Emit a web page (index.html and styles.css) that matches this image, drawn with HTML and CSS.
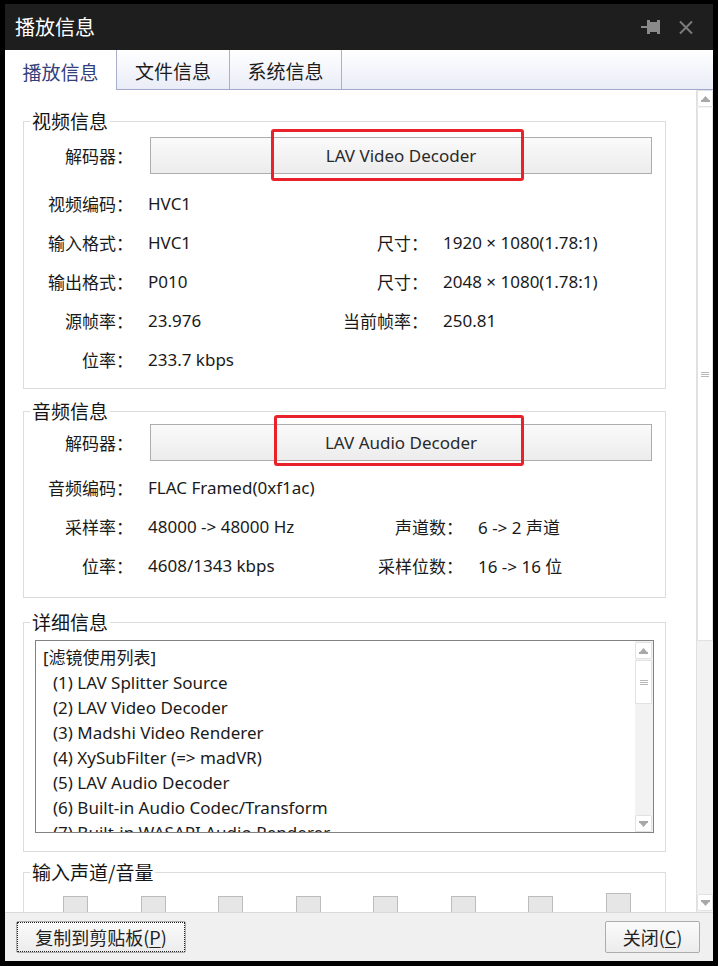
FILE: index.html
```html
<!DOCTYPE html>
<html lang="zh-CN">
<head>
<meta charset="utf-8">
<title>播放信息</title>
<link rel="stylesheet" href="styles.css">
</head>
<body>
<div class="window">
  <div class="titlebar">
    <span class="title">播放信息</span>
    <div class="title-icons">
      <svg class="ico-pin" width="19" height="14" viewBox="0 0 19 14">
        <rect x="0" y="6" width="7" height="2" fill="#8a8a8a"/>
        <rect x="6" y="0" width="3" height="14" fill="#8a8a8a"/>
        <rect x="9" y="2" width="7" height="10" fill="#8a8a8a"/>
        <rect x="16" y="0" width="3" height="14" fill="#8a8a8a"/>
      </svg>
      <svg class="ico-close" width="16" height="15" viewBox="0 0 16 15">
        <path d="M2 1.5 L14 13.5 M14 1.5 L2 13.5" stroke="#7c7c7c" stroke-width="2" fill="none"/>
      </svg>
    </div>
  </div>

  <div class="tabs">
    <div class="tab tab-active">播放信息</div>
    <div class="tab tab-2">文件信息</div>
    <div class="tab tab-3">系统信息</div>
    <div class="tab-fill"></div>
  </div>

  <div class="body">
    <div class="pane">
      <fieldset class="group group-video">
        <legend>视频信息</legend>
        <div class="decoder-row">
          <span class="lbl">解码器：</span>
          <div class="decoder-btn">LAV Video Decoder<span class="mark mark-video"></span></div>
        </div>
        <div class="rows rows-video">
          <span class="lbl">视频编码：</span><span class="val">HVC1</span><span></span><span></span>
          <span class="lbl">输入格式：</span><span class="val">HVC1</span><span class="lbl">尺寸：</span><span class="val">1920 × 1080(1.78:1)</span>
          <span class="lbl">输出格式：</span><span class="val">P010</span><span class="lbl">尺寸：</span><span class="val">2048 × 1080(1.78:1)</span>
          <span class="lbl">源帧率：</span><span class="val">23.976</span><span class="lbl">当前帧率：</span><span class="val">250.81</span>
          <span class="lbl">位率：</span><span class="val">233.7 kbps</span><span></span><span></span>
        </div>
      </fieldset>

      <fieldset class="group group-audio">
        <legend>音频信息</legend>
        <div class="decoder-row">
          <span class="lbl">解码器：</span>
          <div class="decoder-btn">LAV Audio Decoder<span class="mark mark-audio"></span></div>
        </div>
        <div class="rows rows-audio">
          <span class="lbl">音频编码：</span><span class="val">FLAC Framed(0xf1ac)</span><span></span><span></span>
          <span class="lbl">采样率：</span><span class="val">48000 -&gt; 48000 Hz</span><span class="lbl">声道数：</span><span class="val">6 -&gt; 2 声道</span>
          <span class="lbl">位率：</span><span class="val">4608/1343 kbps</span><span class="lbl">采样位数：</span><span class="val">16 -&gt; 16 位</span>
        </div>
      </fieldset>

      <fieldset class="group group-detail">
        <legend>详细信息</legend>
        <div class="listbox">
          <div class="list-text">
            <div>[滤镜使用列表]</div>
            <div class="item">(1) LAV Splitter Source</div>
            <div class="item">(2) LAV Video Decoder</div>
            <div class="item">(3) Madshi Video Renderer</div>
            <div class="item">(4) XySubFilter (=&gt; madVR)</div>
            <div class="item">(5) LAV Audio Decoder</div>
            <div class="item">(6) Built-in Audio Codec/Transform</div>
            <div class="item">(7) Built-in WASAPI Audio Renderer</div>
          </div>
          <div class="list-scroll">
            <div class="sb-btn">
              <svg width="9" height="6" viewBox="0 0 9 6"><path d="M4.5 0 L8 4 L1 4 Z" fill="#a8a8a8"/><rect x="0" y="4" width="9" height="2" fill="#a8a8a8"/></svg>
            </div>
            <div class="sb-thumb list-thumb">
              <svg width="8" height="5" viewBox="0 0 8 5"><rect y="0" width="8" height="1" fill="#b8b8b8"/><rect y="2" width="8" height="1" fill="#b8b8b8"/><rect y="4" width="8" height="1" fill="#b8b8b8"/></svg>
            </div>
            <div class="sb-track"></div>
            <div class="sb-btn">
              <svg width="9" height="6" viewBox="0 0 9 6"><rect x="0" y="0" width="9" height="2" fill="#a8a8a8"/><path d="M1 2 L8 2 L4.5 6 Z" fill="#a8a8a8"/></svg>
            </div>
          </div>
        </div>
      </fieldset>

      <fieldset class="group group-input">
        <legend>输入声道/音量</legend>
        <div class="meters">
          <span class="meter"></span><span class="meter"></span><span class="meter"></span><span class="meter"></span>
          <span class="meter"></span><span class="meter"></span><span class="meter"></span><span class="meter meter-tall"></span>
        </div>
      </fieldset>
    </div>

    <div class="vscroll">
      <div class="sb-btn">
        <svg width="9" height="6" viewBox="0 0 9 6"><path d="M4.5 0 L8 4 L1 4 Z" fill="#a8a8a8"/><rect x="0" y="4" width="9" height="2" fill="#a8a8a8"/></svg>
      </div>
      <div class="sb-thumb main-thumb">
        <svg width="8" height="5" viewBox="0 0 8 5"><rect y="0" width="8" height="1" fill="#b8b8b8"/><rect y="2" width="8" height="1" fill="#b8b8b8"/><rect y="4" width="8" height="1" fill="#b8b8b8"/></svg>
      </div>
      <div class="sb-track"></div>
      <div class="sb-btn">
        <svg width="9" height="6" viewBox="0 0 9 6"><rect x="0" y="0" width="9" height="2" fill="#a8a8a8"/><path d="M1 2 L8 2 L4.5 6 Z" fill="#a8a8a8"/></svg>
      </div>
    </div>
  </div>

  <div class="footer">
    <button class="btn btn-copy">复制到剪贴板(<u>P</u>)</button>
    <button class="btn btn-close">关闭(<u>C</u>)</button>
  </div>
</div>
</body>
</html>
```

FILE: styles.css
```css
* { box-sizing: border-box; }
html, body { margin: 0; padding: 0; }
body {
  background: #000;
  width: 718px;
  height: 966px;
  overflow: hidden;
  font-family: "Noto Sans", "Noto Sans CJK SC", sans-serif;
  color: #1a1a1a;
}
.window {
  margin: 4px 5px 0;
  width: 708px;
  height: 957px;
  display: flex;
  flex-direction: column;
  background: #fff;
}

/* title bar */
.titlebar {
  height: 46px;
  flex: none;
  background: #1e1e1e;
  display: flex;
  align-items: center;
  padding: 0 19px 0 10px;
}
.title {
  flex: 1;
  color: #fff;
  font-family: "Noto Sans CJK SC", sans-serif;
  font-size: 20px;
  line-height: 24px;
}
.title-icons { display: flex; align-items: center; gap: 18px; }

/* tabs */
.tabs {
  height: 40px;
  flex: none;
  display: flex;
  background: linear-gradient(#ffffff, #e9ecf7);
}
.tab {
  height: 40px;
  display: flex;
  align-items: center;
  justify-content: center;
  font-family: "Noto Sans CJK SC", sans-serif;
  font-size: 19px;
  color: #1c1c1c;
  border-right: 1px solid #a9afcd;
  border-bottom: 1px solid #a3a9cb;
  padding-top: 2px;
}
.tab-active {
  width: 112px;
  background: #fff;
  color: #33407c;
  border-bottom: none;
}
.tab-2 { width: 113px; }
.tab-3 { width: 112px; }
.tab-fill { flex: 1; border-bottom: 1px solid #a3a9cb; }

/* body */
.body { height: 822px; flex: none; display: flex; }
.pane {
  width: 691px;
  overflow: hidden;
  padding: 19px 30px 0 18px;
}
.group {
  margin: 0;
  padding: 0;
  border: 1px solid #dcdcdc;
  min-width: 0;
}
.group legend {
  margin-left: 6px;
  padding: 0 2px;
  font-family: "Noto Sans CJK SC", sans-serif;
  font-size: 19px;
  line-height: 24px;
  color: #151515;
}
.group-video { padding: 4px 0 9px; margin-bottom: 10px; }
.group-audio { padding: 1px 0 12px; margin-bottom: 12px; }
.group-detail { padding: 6px 0 18px; margin-bottom: 8px; }
.group-input { padding: 0; height: 120px; }

.lbl {
  text-align: right;
  font-family: "Noto Sans CJK SC", sans-serif;
  font-size: 17px;
  white-space: nowrap;
}
.val { font-size: 17px; white-space: nowrap; }

.decoder-row { display: flex; align-items: center; height: 37px; }
.decoder-row .lbl { width: 109px; }
.decoder-btn {
  position: relative;
  margin-left: 17px;
  width: 502px;
  height: 37px;
  border: 1px solid #adadad;
  background: linear-gradient(#fafafa, #ececec);
  display: flex;
  align-items: center;
  justify-content: center;
  font-size: 17px;
  color: #2a2a2a;
}
.mark {
  position: absolute;
  border: 3px solid #e9212b;
  border-radius: 3px;
}
.mark-video { left: 120px; top: -9px; width: 253px; height: 52px; }
.mark-audio { left: 123px; top: -10px; width: 250px; height: 51px; }

.rows {
  display: grid;
  grid-template-columns: 109px 177px 88px 1fr;
  column-gap: 15px;
  grid-auto-rows: 39px;
  align-items: center;
}
.rows-video { margin-top: 10px; }
.rows-audio { margin-top: 7px; grid-template-columns: 109px 212px 88px 1fr; }

/* listbox */
.listbox {
  margin: 0 11px;
  height: 193px;
  border: 1px solid #828282;
  display: flex;
}
.list-text {
  flex: 1;
  padding: 4px 0 0 7px;
  font-size: 17px;
  line-height: 25px;
  overflow: hidden;
  white-space: nowrap;
}
.item { padding-left: 10px; }
.list-scroll {
  width: 18px;
  background: #f2f2f2;
  display: flex;
  flex-direction: column;
  padding: 1px 1px 0 0;
}

/* scrollbar parts */
.sb-btn {
  height: 17px;
  flex: none;
  background: #fff;
  border: 1px solid #e2e2e2;
  border-radius: 2px;
  display: flex;
  align-items: center;
  justify-content: center;
}
.sb-thumb {
  flex: none;
  background: #fff;
  border: 1px solid #e2e2e2;
  display: flex;
  align-items: center;
  justify-content: center;
}
.list-thumb { height: 44px; margin-top: 1px; }
.sb-track { flex: 1; }

.vscroll {
  width: 17px;
  border-left: 1px solid #e0e0e0;
  background: #f2f2f2;
  display: flex;
  flex-direction: column;
  padding-bottom: 1px;
}
.main-thumb { height: 533px; margin-top: 1px; border-top: none; }

/* meters */
.meters {
  display: flex;
  align-items: flex-start;
  gap: 52.5px;
  padding: 12px 0 0 39px;
}
.meter {
  width: 25px;
  height: 30px;
  background: #e6e6e6;
  border: 1px solid #bcbcbc;
}
.meter-tall { margin-top: -3px; height: 33px; }

/* footer */
.footer {
  height: 49px;
  flex: none;
  background: #f0f0f0;
  border-top: 1px solid #dadada;
  display: flex;
  justify-content: space-between;
  align-items: flex-start;
  padding: 8px 13px 0 11px;
}
.btn {
  height: 32px;
  border: 1px solid #adadad;
  border-radius: 2px;
  background: linear-gradient(#fbfbfb, #ececec);
  font-family: "Noto Sans CJK SC", sans-serif;
  font-size: 18px;
  color: #222;
  padding: 0;
  display: flex;
  align-items: center;
  justify-content: center;
}
.btn u { text-underline-offset: 2px; }
.btn-copy {
  width: 170px;
  outline: 1px dotted #222;
  outline-offset: -2px;
}
.btn-close { width: 95px; }
```
